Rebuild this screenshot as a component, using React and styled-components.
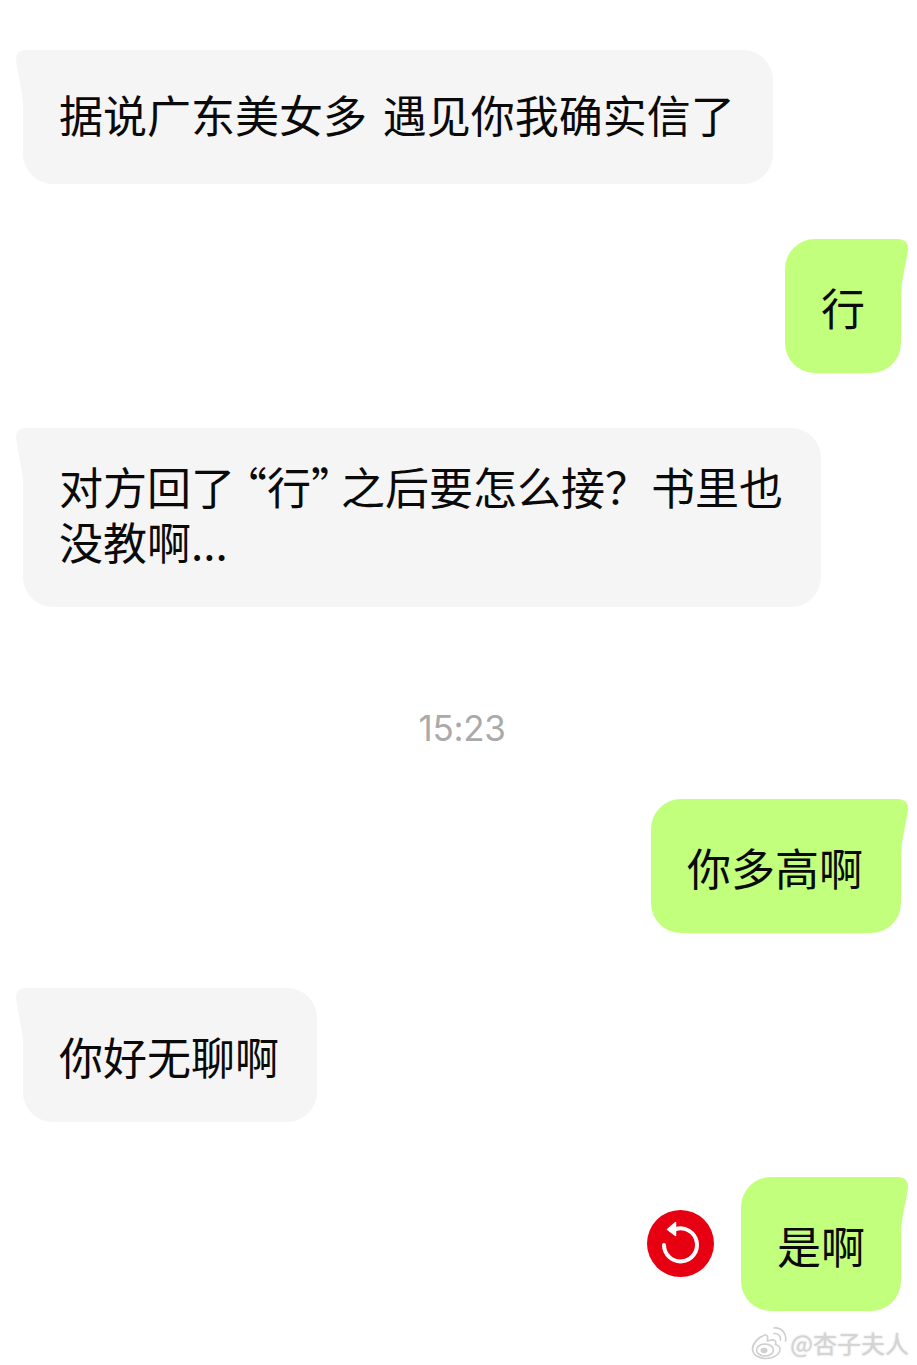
import React from "react";
import styled, { createGlobalStyle } from "styled-components";

const GlobalStyle = createGlobalStyle`
  html, body {
    margin: 0;
    padding: 0;
    background: #fff;
  }
`;

const Page = styled.div`
  position: relative;
  width: 917px;
  height: 1365px;
  box-sizing: border-box;
  padding: 50px 16px 0 23px;
  overflow: hidden;
  display: flex;
  flex-direction: column;
  font-family: "Noto Sans CJK SC", "Noto Sans", sans-serif;
`;

const Row = styled.div`
  display: flex;
  align-items: center;
  justify-content: ${(p) => (p.$mine ? "flex-end" : "flex-start")};
  margin-bottom: ${(p) => p.$gap}px;
`;

const Bubble = styled.div`
  position: relative;
  box-sizing: border-box;
  min-height: 134px;
  padding: ${(p) => (p.$mine ? "35px 38px 32px 36px" : "31px 38px 37px 36px")};
  ${(p) => p.$tight && "padding-right: 36px;"}
  ${(p) => p.$drop && "padding-top: 35px; padding-bottom: 33px;"}
  ${(p) => p.$tall && "padding-bottom: 38px;"}
  display: flex;
  align-items: center;
  border-radius: ${(p) => (p.$mine ? "30px 8px 30px 30px" : "8px 30px 30px 30px")};
  background: ${(p) => (p.$mine ? "#c1ff7d" : "#f5f5f5")};
  color: #0a0a0a;
  font-size: 44px;
  font-weight: 400;
  line-height: 55px;
  white-space: nowrap;
  word-spacing: 6px;

  &::before {
    content: "";
    position: absolute;
    top: 0;
    ${(p) => (p.$mine ? "right: -7px;" : "left: -7px;")}
    width: 24px;
    height: 62px;
    background: inherit;
    transform: ${(p) => (p.$mine ? "none" : "scaleX(-1)")};
    clip-path: path("M0 0 L14 0 Q24 0 24 10 C22 26 18 38 17 54 L17 62 L0 62 Z");
  }
`;

const BubbleText = styled.span`
  position: relative;
`;

const Quote = styled.span`
  ${(p) => (p.$open ? "margin-left: -12px;" : "margin-right: -14px;")}
`;

const LooseChar = styled.span`
  margin-right: 2px;
`;

const TimeStamp = styled.div`
  text-align: center;
  margin: -2px -7px 49px -7px;
  color: #aaaaaa;
  font-family: Inter, "Liberation Sans", sans-serif;
  font-size: 35px;
  line-height: 44px;
  letter-spacing: -0.3px;
`;

const RetryBadge = styled.div`
  width: 67px;
  height: 67px;
  border-radius: 50%;
  background: #e60012;
  margin: 0 27px 2px 0;
  display: flex;
  align-items: center;
  justify-content: center;
`;

const Watermark = styled.div`
  position: absolute;
  right: 8px;
  bottom: 5px;
  display: flex;
  align-items: center;
  gap: 3px;
  color: #d4d4d4;
  font-size: 24px;
  line-height: 34px;
  text-shadow: 0 0 2px rgba(150, 150, 150, 0.45);
`;

function RetryIcon() {
  return (
    <svg width="67" height="67" viewBox="0 0 67 67" fill="none">
      <path
        d="M29 19 A16.5 16.5 0 1 1 17 35"
        stroke="#fff"
        strokeWidth="4"
        strokeLinecap="round"
      />
      <path d="M28.5 12.500 L28.500 25.500 L20.500 19.500 Z" fill="#fff" stroke="#fff" strokeWidth="1.500" strokeLinejoin="round" />
    </svg>
  );
}

function WeiboLogo() {
  return (
    <svg width="36" height="34" viewBox="0 0 36 34" fill="none">
      <path
        d="M14 9 C7 11 1.500 18 1.500 23 C1.500 29 8 32.500 15 32.500 C23 32.500 29 28 29 23 C29 20 26 19 24.500 18.500 C25.500 15.500 24 13.500 20 14 L16.500 15 C17 11 16.500 8.500 14 9 Z"
        fill="#fff"
        stroke="#cfcfcf"
        strokeWidth="1.6"
      />
      <ellipse cx="14" cy="24" rx="8.500" ry="6" fill="#fff" stroke="#cfcfcf" strokeWidth="1.6" />
      <ellipse cx="13" cy="24.500" rx="3.500" ry="2.800" fill="#cfcfcf" />
      <path d="M23 7.500 C27 7 30 10 29.500 14" stroke="#cfcfcf" strokeWidth="1.6" strokeLinecap="round" />
      <path d="M23 2 C30 1 36 7 34.500 15" stroke="#cfcfcf" strokeWidth="1.6" strokeLinecap="round" />
    </svg>
  );
}

export default function App() {
  return (
    <Page>
      <GlobalStyle />
      <Row $gap={55}>
        <Bubble>
          <BubbleText>据说广东美女多 遇见你我确实信了</BubbleText>
        </Bubble>
      </Row>
      <Row $mine $gap={55}>
        <Bubble $mine $tight>
          <BubbleText>行</BubbleText>
        </Bubble>
      </Row>
      <Row $gap={101}>
        <Bubble $tall>
          <BubbleText>
            对方回了<Quote $open>“</Quote>行<Quote>”</Quote>之后要怎么接<LooseChar>？</LooseChar>书里也
            <br />
            没教啊...
          </BubbleText>
        </Bubble>
      </Row>
      <TimeStamp>15:23</TimeStamp>
      <Row $mine $gap={55}>
        <Bubble $mine>
          <BubbleText>你多高啊</BubbleText>
        </Bubble>
      </Row>
      <Row $gap={55}>
        <Bubble $drop>
          <BubbleText>你好无聊啊</BubbleText>
        </Bubble>
      </Row>
      <Row $mine $gap={0}>
        <RetryBadge>
          <RetryIcon />
        </RetryBadge>
        <Bubble $mine $tight>
          <BubbleText>是啊</BubbleText>
        </Bubble>
      </Row>
      <Watermark>
        <WeiboLogo />
        <span>@杏子夫人</span>
      </Watermark>
    </Page>
  );
}
